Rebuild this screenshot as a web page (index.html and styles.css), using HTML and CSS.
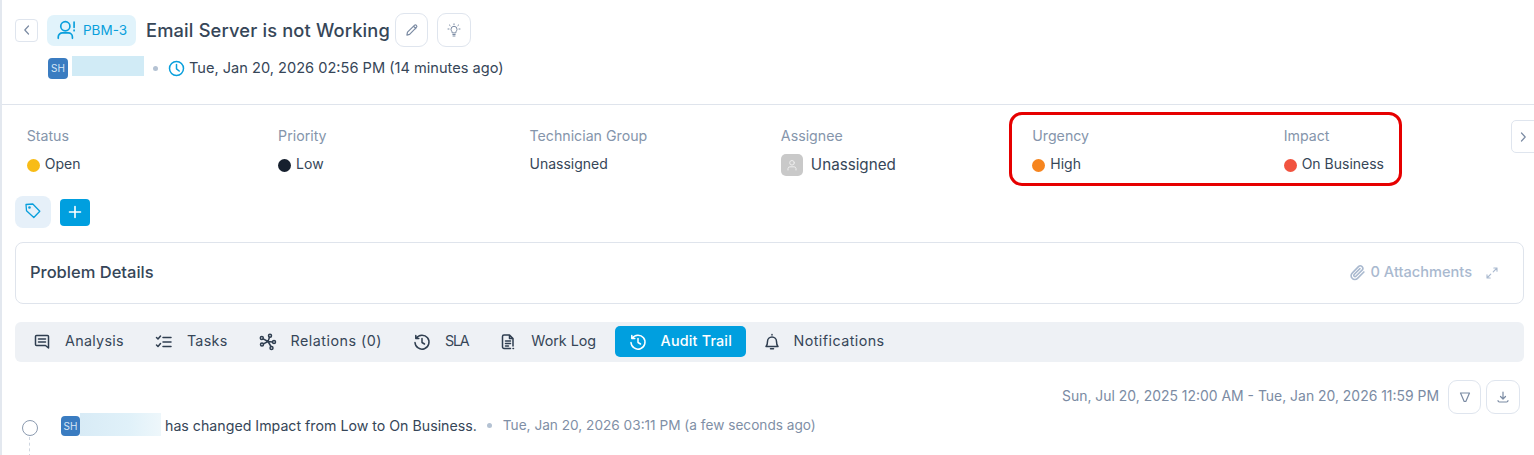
FILE: index.html
```html
<!DOCTYPE html>
<html lang="en">
<head>
<meta charset="utf-8">
<title>PBM-3</title>
<link rel="stylesheet" href="styles.css">
</head>
<body>
<div class="page">
  <header class="head">
    <div class="title-row">
      <button class="back"><svg width="12" height="12" viewBox="0 0 12 12"><path d="M7.500 2 3.800 6l3.700 4" class="st"/></svg></button>
      <div class="chip">
        <svg width="20" height="20" viewBox="0 0 24 24" class="chip-ic"><circle cx="10" cy="7.500" r="5.500"/><path d="M1.500 22v-1.500a5 5 0 0 1 5-5h7a5 5 0 0 1 5 5V22"/><path d="M20.500 2.500v6.500M20.500 12v.8"/></svg>
        <span>PBM-3</span>
      </div>
      <h1 class="title">Email Server is not Working</h1>
      <button class="square first"><svg width="14" height="14" viewBox="0 0 14 14" class="st"><path d="M2.500 9.200 9.400 2.300a1.300 1.300 0 0 1 2 2L4.600 11.300l-2.700.8zM8.500 3.200l2.300 2.300"/></svg></button>
      <button class="square wide-sq"><svg width="14" height="14" viewBox="0 0 14 14" class="st thin"><path d="M5.200 9.500c0-1.400-1.200-1.800-1.200-3.200a3 3 0 0 1 6 0c0 1.400-1.200 1.800-1.200 3.200zM5.800 11.500h2.400M6 13h2M7 .8v.9M2.400 2l.7.6M11.600 2l-.7.6M1 6h1M12 6h1"/></svg></button>
    </div>
    <div class="meta-row">
      <span class="avatar">SH</span>
      <span class="blur"></span>
      <span class="dot"></span>
      <svg width="17" height="17" viewBox="0 0 17 17" class="clock"><circle cx="8.500" cy="8.500" r="7"/><path d="M8.500 4.500v4.300l2.700 2.200"/></svg>
      <span class="meta-text">Tue, Jan 20, 2026 02:56 PM (14 minutes ago)</span>
    </div>
  </header>

  <section class="fields">
    <div class="field"><div class="label">Status</div><div class="value"><i class="bullet open"></i>Open</div></div>
    <div class="field"><div class="label">Priority</div><div class="value"><i class="bullet low"></i>Low</div></div>
    <div class="field"><div class="label">Technician Group</div><div class="value">Unassigned</div></div>
    <div class="field"><div class="label">Assignee</div><div class="value assignee"><span class="user"><svg width="12" height="12" viewBox="0 0 12 12"><circle cx="6" cy="3.800" r="2.300"/><path d="M2 11V9.500A2 2 0 0 1 4 7.800h4a2 2 0 0 1 2 1.700V11"/></svg></span>Unassigned</div></div>
    <div class="field"><div class="label">Urgency</div><div class="value"><i class="bullet high"></i>High</div></div>
    <div class="field"><div class="label">Impact</div><div class="value"><i class="bullet biz"></i>On Business</div></div>
    <div class="highlight"></div>
    <button class="next"><svg width="12" height="12" viewBox="0 0 12 12"><path d="M4.500 2 8.200 6l-3.700 4" class="st"/></svg></button>
  </section>

  <div class="tags">
    <button class="tag"><svg width="18" height="18" viewBox="0 0 18 18"><path d="M2 2.500 8.800 2l7 7.200-6 6.300L2.500 8.800z"/><circle cx="5.500" cy="5.500" r=".7"/></svg></button>
    <button class="plus"><svg width="14" height="14" viewBox="0 0 14 14"><path d="M7 1.500v11M1.500 7h11"/></svg></button>
  </div>

  <section class="card">
    <h2>Problem Details</h2>
    <div class="attach">
      <svg width="17" height="17" viewBox="0 0 16 16"><path d="M14 7.500 8 13.500a3.300 3.300 0 0 1-5-.1 3.300 3.300 0 0 1 0-4.800l5.900-6.100a2.300 2.300 0 0 1 3.400 3.300L6.500 11.500a1.100 1.100 0 0 1-1.700-1.600l5.500-5.600"/></svg>
      <span>0 Attachments</span>
      <svg class="collapse" width="12" height="12" viewBox="0 0 12 12"><path d="M7.200 4.800 11 1M7.800 1H11v3.200M4.800 7.200 1 11M1 7.800V11h3.200"/></svg>
    </div>
  </section>

  <nav class="tabs">
    <a class="tab"><svg width="18" height="18" viewBox="0 0 18 18"><path d="M2.500 3.500a1 1 0 0 1 1-1h11a1 1 0 0 1 1 1v11.500l-3-2.500h-9a1 1 0 0 1-1-1zM5.500 6h7M5.500 9h7"/></svg><span>Analysis</span></a>
    <a class="tab"><svg width="18" height="18" viewBox="0 0 18 18"><path d="m1.500 4.500 1.500 1.500 2.500-3M1.500 12l1.500 1.500L5.500 10.500M8 4.500h8M8 9h8M8 13.500h8"/></svg><span>Tasks</span></a>
    <a class="tab"><svg width="18" height="18" viewBox="0 0 18 18"><circle cx="11" cy="2.800" r="1.500"/><circle cx="2.800" cy="5" r="1.500"/><circle cx="15" cy="9" r="1.500"/><circle cx="3" cy="11.500" r="1.500"/><circle cx="12.500" cy="15" r="1.500"/><path d="M10.500 4.300 9 8.500M4.200 5.800 9 8.500l4.500.5M4.400 10.800 9 8.500l3 5"/></svg><span class="rel">Relations (0)</span></a>
    <a class="tab"><svg width="18" height="18" viewBox="0 0 18 18"><path d="M3.200 5.200A7 7 0 1 1 2 9.500M2.800 2.500v3h3M9 5.500v4l2.500 1.500"/></svg><span class="sla">SLA</span></a>
    <a class="tab"><svg width="18" height="18" viewBox="0 0 18 18"><path d="M11.500 15.500H5a1.500 1.500 0 0 1-1.500-1.500V3.500A1.500 1.500 0 0 1 5 2h5.500l3.500 3.500V13M10.500 2v3.500H14M6.500 8h5M6.500 10.500h5M6.500 13h3M14 15.500h.5"/></svg><span class="log">Work Log</span></a>
    <a class="tab active"><svg width="18" height="18" viewBox="0 0 18 18"><path d="M3.200 5.200A7 7 0 1 1 2 9.500M2.800 2.500v3h3M9 5.500v4l2.500 1.500"/></svg><span>Audit Trail</span></a>
    <a class="tab notif"><svg width="18" height="18" viewBox="0 0 18 18"><path d="M3 13.500c1-1 1.500-1.800 1.500-5a4.500 4.500 0 0 1 9 0c0 3.200.5 4 1.500 5zM7.500 15.800h3M9 2V1.500"/></svg><span>Notifications</span></a>
  </nav>

  <div class="range">
    <span>Sun, Jul 20, 2025 12:00 AM - Tue, Jan 20, 2026 11:59 PM</span>
    <button class="square small"><svg width="14" height="14" viewBox="0 0 14 14" class="st"><path d="M2.500 3h9L7.800 11.500H6.200z"/></svg></button>
    <button class="square small wide-sq"><svg width="14" height="14" viewBox="0 0 14 14" class="st"><path d="M7 2v6.500M4.500 6.500 7 9l2.500-2.500M2 10.500c0 1 .7 1.500 1.500 1.500h7c.8 0 1.500-.5 1.500-1.500"/></svg></button>
  </div>

  <div class="entry">
    <div class="rail"><span class="ring"></span><span class="dash"></span></div>
    <span class="avatar mini">SH</span>
    <span class="blur wide"></span>
    <span class="entry-text">has changed Impact from Low to On Business.</span>
    <span class="dot"></span>
    <span class="entry-time">Tue, Jan 20, 2026 03:11 PM (a few seconds ago)</span>
  </div>
</div>
</body>
</html>
```
FILE: styles.css
```css
* { box-sizing: border-box; }
html, body { margin: 0; height: 100%; }
body { background: #fff; overflow: hidden; font-family: Inter, "Noto Sans", sans-serif; color: #364658; font-size: 14px; }
button { padding: 0; background: #fff; font: inherit; display: flex; align-items: center; justify-content: center; }
svg { display: block; flex: none; fill: none; stroke-linecap: round; stroke-linejoin: round; }
.st { stroke: #7b8ba3; fill: none; stroke-width: 1.2; }
.thin { stroke-width: 1; }
.page { border-left: 2px solid #e3e8ef; height: 455px; width: 1534px; overflow: hidden; }
.head { height: 105px; border-bottom: 1px solid #dfe4ec; padding: 13px 0 0 15px; margin-left: -2px; }
.title-row { display: flex; align-items: center; height: 34px; }
.back { width: 23px; height: 23px; border: 1px solid #dfe5ee; border-radius: 4px; margin-right: 9px; }
.chip { width: 89px; height: 31px; background: #e1f3fb; border-radius: 7px; display: flex; align-items: center; gap: 6px; padding-left: 10px; color: #099fdc; font-size: 13.5px; }
.chip-ic { stroke: #099fdc; stroke-width: 2; }
.title { margin: 0 5px 0 10px; font-size: 18.300px; font-weight: 500; color: #364658; letter-spacing: .15px; white-space: nowrap; width: 244px; }
.square { width: 33px; height: 34px; border: 1px solid #dfe5ee; border-radius: 9px; }
.wide-sq { width: 34px; }
.first { margin-right: 9px; }
.meta-row { display: flex; align-items: center; height: 24px; margin-top: 9px; padding-left: 33px; }
.avatar { width: 20px; height: 21px; background: #3a7cc1; color: #d6e6f6; border-radius: 4px; font-size: 10px; display: flex; align-items: center; justify-content: center; flex: none; }
.blur { width: 72px; height: 20px; margin: -4px 0 0 4px; background: #d1ebf6; flex: none; }
.dot { width: 5px; height: 5px; border-radius: 50%; background: #b4c2d3; flex: none; margin: 0 10px 0 9px; }
.clock { stroke: #099fdc; stroke-width: 1.500; margin-right: 4px; }
.meta-text { font-size: 14.600px; white-space: nowrap; margin-bottom: 1px; }
.fields { position: relative; display: grid; grid-template-columns: repeat(6, 251.400px); height: 91px; padding: 21px 0 0 24.700px; }
.label { font-size: 14.200px; color: #8595ab; line-height: 20px; }
.value { display: flex; align-items: center; height: 24px; margin-top: 5px; font-size: 14px; white-space: nowrap; color: #364658; }
.bullet { width: 13px; height: 13px; border-radius: 50%; margin: 4px 5px 0 0; }
.open { background: #f8bc17; }
.low { background: #16202e; }
.high { background: #f6851f; }
.biz { background: #f1533f; }
.user { width: 22px; height: 22px; background: #c9c9c9; border-radius: 5px; margin: 2px 8px 0 0; display: flex; align-items: center; justify-content: center; }
.user svg { stroke: #eee; stroke-width: 1; }
.assignee { font-size: 15.200px; margin-top: 6px; }
.highlight { position: absolute; left: 1007px; top: 7px; width: 393px; height: 74px; border: 3px solid #e60000; border-radius: 13px; }
.next { position: absolute; left: 1509px; top: 15px; width: 30px; height: 33px; border: 1px solid #dfe5ee; border-radius: 5px 0 0 5px; justify-content: flex-start; padding-left: 5px; }
.tags { display: flex; align-items: center; height: 32px; margin-left: 13px; gap: 9px; }
.tag { width: 36px; height: 32px; background: #e6f0f9; border: 0; border-radius: 8px; }
.tag svg { stroke: #099fdc; stroke-width: 1.300; margin: -3px 1px 0 0; }
.plus { width: 30px; height: 27px; background: #009fdf; border: 0; border-radius: 4px; }
.plus svg { stroke: #fff; stroke-width: 1.600; }
.card { margin: 14px 10px 0 13px; height: 62px; border: 1px solid #dfe4ec; border-radius: 8px; display: flex; align-items: center; justify-content: space-between; padding: 0 25px 0 14px; }
.card h2 { margin: 0 0 2px; font-size: 16.500px; font-weight: 500; color: #364658; white-space: nowrap; }
.attach { display: flex; align-items: center; color: #a9b9cf; font-size: 14.600px; font-weight: 500; margin-bottom: 2px; }
.attach svg { stroke: #a9b9cf; stroke-width: 1.500; margin-right: 5px; }
.attach .collapse { margin: 2px 0 0 14px; stroke-width: 1.100; }
.tabs { margin: 18px 10px 0 13px; height: 40px; background: #eef1f5; border-radius: 6px; display: flex; align-items: center; padding-left: 2.500px; }
.tab { display: flex; align-items: center; height: 31px; padding: 0 15.500px; margin-bottom: 1px; gap: 14px; font-size: 14.300px; letter-spacing: .3px; color: #364658; border-radius: 5px; white-space: nowrap; }
.tab span { margin-bottom: 3px; }
.tab .sla { letter-spacing: -1.300px; }
.tab .rel { letter-spacing: .5px; }
.tab .log { letter-spacing: 0; }
.tab svg { stroke: #2f3e50; stroke-width: 1.500; }
.tab.active { background: #009fdf; color: #fff; font-weight: 500; padding: 0 14px; margin-left: 3px; margin-right: 2px; letter-spacing: .2px; }
.tab.active svg { stroke: #fff; }
.tab.notif { gap: 12px; letter-spacing: .45px; }
.range { display: flex; align-items: center; justify-content: flex-end; margin-top: 18px; height: 34px; padding-right: 9px; color: #7b8ba3; font-size: 13.930px; }
.range span { margin: 0 9px 2px 0; white-space: nowrap; }
.small { margin-right: 5px; }
.entry { display: flex; align-items: center; height: 24px; margin-top: -1px; font-size: 14.200px; position: relative; padding-left: 59px; }
.rail { position: absolute; left: 20px; top: 7px; width: 16px; }
.ring { display: block; width: 16px; height: 16px; border: 1px solid #8c9bb0; border-radius: 50%; }
.dash { display: block; width: 0; height: 20px; margin: 1px 0 0 7px; border-left: 1px dashed #cfd6e0; }
.mini { width: 19px; height: 20px; margin-top: 2px; }
.wide { width: 81px; height: 23px; margin: 0 4px 2px 0; background: linear-gradient(90deg, #d8ebf6, #e0f1f9 60%, #eef7fb); }
.entry-text { white-space: nowrap; color: #364658; }
.entry-time { white-space: nowrap; color: #7f8fa6; font-size: 13.650px; }
.entry .dot { margin: 0 11px 0 10px; }
```
